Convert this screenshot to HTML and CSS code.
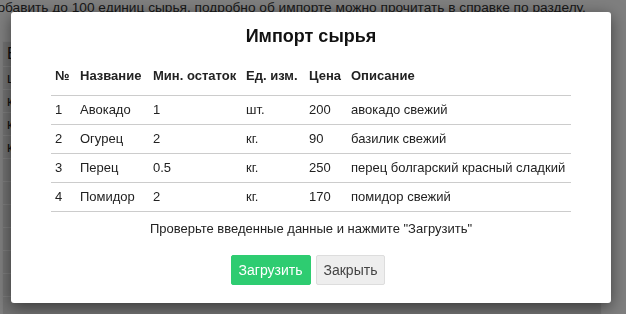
FILE: index.html
```html
<!DOCTYPE html>
<html lang="ru">
<head>
    <meta charset="UTF-8">
    <title>Импорт сырья</title>
    <link rel="stylesheet" href="styles.css">
</head>
<body>
    <div class="page">
        <p class="intro">Добавить до 100 единиц сырья, подробно об импорте можно прочитать в справке по разделу.</p>
        <table class="stock">
            <tr><th>Ед. изм.</th></tr>
            <tr><td>шт.</td></tr>
            <tr><td>кг.</td></tr>
            <tr><td>кг.</td></tr>
            <tr><td>кг.</td></tr>
            <tr><td></td></tr>
            <tr><td></td></tr>
            <tr><td></td></tr>
            <tr><td></td></tr>
            <tr><td></td></tr>
            <tr><td></td></tr>
            <tr><td></td></tr>
        </table>
    </div>

    <div class="overlay"></div>

    <div class="modal">
        <h2 class="modal-title">Импорт сырья</h2>
        <table class="import-table">
            <colgroup>
                <col class="col-num">
                <col class="col-name">
                <col class="col-min">
                <col class="col-unit">
                <col class="col-price">
                <col>
            </colgroup>
            <thead>
                <tr>
                    <th>№</th>
                    <th>Название</th>
                    <th>Мин. остаток</th>
                    <th>Ед. изм.</th>
                    <th>Цена</th>
                    <th>Описание</th>
                </tr>
            </thead>
            <tbody>
                <tr><td>1</td><td>Авокадо</td><td>1</td><td>шт.</td><td>200</td><td>авокадо свежий</td></tr>
                <tr><td>2</td><td>Огурец</td><td>2</td><td>кг.</td><td>90</td><td>базилик свежий</td></tr>
                <tr><td>3</td><td>Перец</td><td>0.5</td><td>кг.</td><td>250</td><td>перец болгарский красный сладкий</td></tr>
                <tr><td>4</td><td>Помидор</td><td>2</td><td>кг.</td><td>170</td><td>помидор свежий</td></tr>
            </tbody>
        </table>
        <p class="modal-note">Проверьте введенные данные и нажмите "Загрузить"</p>
        <div class="modal-actions">
            <button class="btn btn-primary">Загрузить</button>
            <button class="btn btn-default">Закрыть</button>
        </div>
    </div>
</body>
</html>
```

FILE: styles.css
```css
* {
    margin: 0;
    padding: 0;
    box-sizing: border-box;
}

body {
    font-family: "Liberation Sans", Arial, sans-serif;
    color: #222;
    background: #fff;
    width: 626px;
    height: 314px;
    overflow: hidden;
}

/* Page behind the dialog */
.page {
    padding-left: 2px;
}

.intro {
    margin-left: -14px;
    font-size: 13.7px;
    line-height: 16px;
    white-space: nowrap;
    color: #333;
}

.stock {
    margin-top: 25px;
    width: 600px;
    border-collapse: collapse;
    font-size: 14px;
    background: #e4e4e4;
}

.stock th,
.stock td {
    border: 1px solid #fbfbfb;
    height: 23px;
    padding: 0 4px;
    text-align: left;
    font-weight: normal;
}

.stock th {
    height: 25px;
    font-size: 16px;
}

.overlay {
    position: fixed;
    inset: 0;
    background: rgba(0, 0, 0, 0.5);
}

/* Dialog */
.modal {
    position: absolute;
    top: 12px;
    left: 11px;
    width: 600px;
    padding: 14px 40px 18px;
    background: #fff;
    border-radius: 3px;
    box-shadow: 0 4px 16px rgba(0, 0, 0, 0.5);
    text-align: center;
}

.modal-title {
    font-size: 18px;
    line-height: 21px;
    font-weight: 700;
    color: #111;
    margin-bottom: 15px;
}

.import-table {
    width: 100%;
    border-collapse: collapse;
    table-layout: fixed;
    font-size: 13px;
    line-height: 16px;
    text-align: left;
}

.col-num { width: 25px; }
.col-name { width: 73px; }
.col-min { width: 93px; }
.col-unit { width: 63px; }
.col-price { width: 42px; }

.import-table th {
    padding: 6px 4px 11px;
    font-weight: 700;
    border-bottom: 1px solid #ccc;
}

.import-table td {
    padding: 6px 4px;
    border-bottom: 1px solid #ccc;
    white-space: nowrap;
}

.modal-note {
    margin-top: 9px;
    font-size: 13px;
    line-height: 16px;
}

.modal-actions {
    display: flex;
    justify-content: center;
    gap: 5px;
    margin-top: 18px;
    padding-right: 6px;
}

.btn {
    height: 30px;
    padding: 0 7px;
    border: 1px solid transparent;
    border-radius: 2px;
    font-family: inherit;
    font-size: 14px;
    cursor: pointer;
}

.btn-primary {
    background: #2ecc71;
    border-color: #2ecc71;
    color: #fff;
}

.btn-default {
    background: #eee;
    border-color: #ddd;
    color: #444;
}
```
